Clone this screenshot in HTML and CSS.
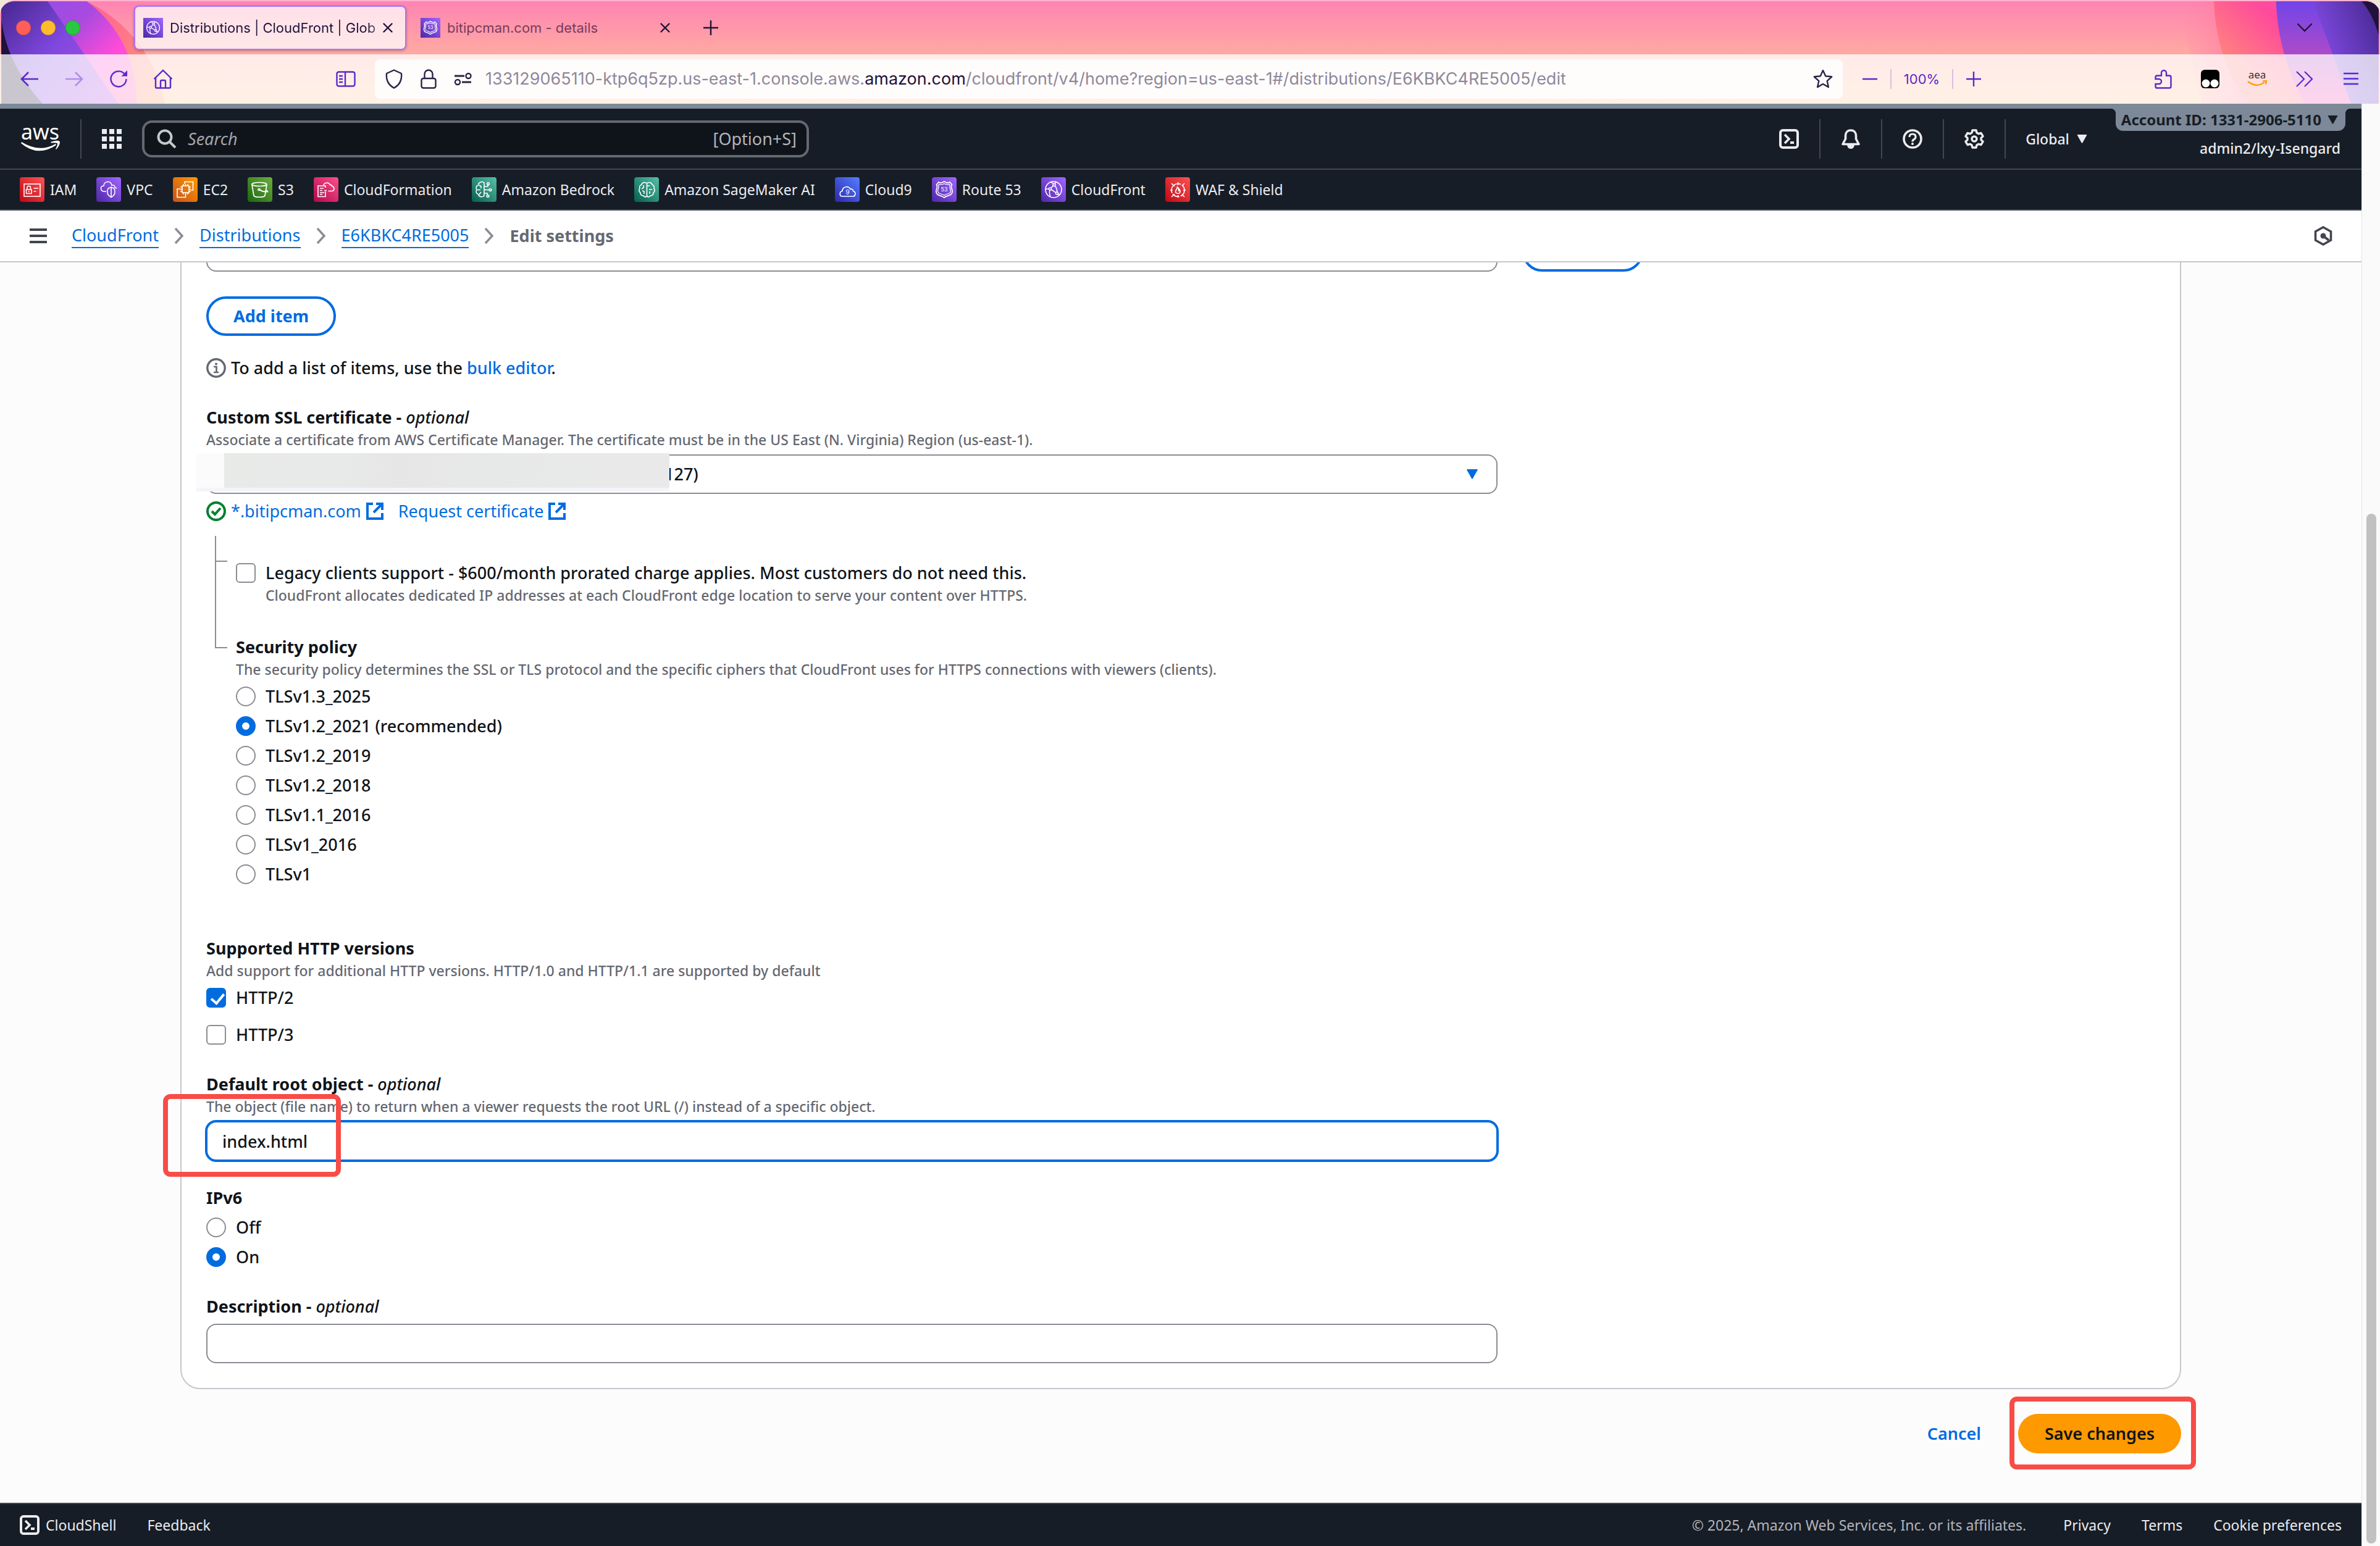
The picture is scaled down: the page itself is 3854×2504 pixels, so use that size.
FILE: index.html
```html
<!DOCTYPE html>
<html lang="en">
<head>
    <meta charset="UTF-8">
    <meta name="viewport" content="width=device-width, initial-scale=1.0">
    <title>Distributions | CloudFront | Global</title>
    <link rel="stylesheet" href="styles.css">
</head>
<body>
    <!-- Shared symbols -->
    <svg class="sprite" aria-hidden="true">
        <defs>
            <linearGradient id="g-red" x1="0" y1="1" x2="1" y2="0"><stop offset="0" stop-color="#bd0816"/><stop offset="1" stop-color="#ff5252"/></linearGradient>
            <linearGradient id="g-purple" x1="0" y1="1" x2="1" y2="0"><stop offset="0" stop-color="#4d27a8"/><stop offset="1" stop-color="#a166ff"/></linearGradient>
            <linearGradient id="g-orange" x1="0" y1="1" x2="1" y2="0"><stop offset="0" stop-color="#c8511b"/><stop offset="1" stop-color="#ff9900"/></linearGradient>
            <linearGradient id="g-green" x1="0" y1="1" x2="1" y2="0"><stop offset="0" stop-color="#1b660f"/><stop offset="1" stop-color="#6cae3e"/></linearGradient>
            <linearGradient id="g-pink" x1="0" y1="1" x2="1" y2="0"><stop offset="0" stop-color="#b0084d"/><stop offset="1" stop-color="#ff4f8b"/></linearGradient>
            <linearGradient id="g-teal" x1="0" y1="1" x2="1" y2="0"><stop offset="0" stop-color="#055f4e"/><stop offset="1" stop-color="#56c0a7"/></linearGradient>
            <linearGradient id="g-blue" x1="0" y1="1" x2="1" y2="0"><stop offset="0" stop-color="#2e27ad"/><stop offset="1" stop-color="#527fff"/></linearGradient>
        </defs>
        <symbol id="cloudfront" viewBox="0 0 40 40">
            <rect width="40" height="40" fill="url(#g-purple)"/>
            <g fill="none" stroke="#fff" stroke-width="1.6">
                <circle cx="20" cy="20" r="13"/>
                <circle cx="14.5" cy="19" r="2"/><circle cx="21" cy="12.500" r="2"/><circle cx="25.500" cy="26" r="2"/>
                <path d="M16 17.500l3.600-3.600M16.300 20l7.400 4.800M22.500 14.300c2.500 3 3.300 6 3.200 9.700M7 19h5.500M14 21c-1 3-.5 7 1 10.500M15 8c2 .5 4 1.500 5 3M24 8c-1 .7-1.500 1.500-2 2.700M27 27.500c1 .5 2 .5 3.500 0"/>
            </g>
        </symbol>
        <symbol id="route53-shield" viewBox="0 0 40 40">
            <rect width="40" height="40" fill="url(#g-purple)"/>
            <path d="M11 8c2 1.500 4 1.500 6 .4L20 7l3 1.400c2 1.100 4 1.100 6 -.4l3.500 4c-1.500 2.500-1.500 4 0 7.500 1 3 1 6-1.500 8.500-3 2-7.500 2-11 5-3.500-3-8-3-11-5-2.500-2.500-2.500-5.500-1.500-8.500 1.500-3.500 1.500-5 0-7.500z" fill="none" stroke="#fff" stroke-width="1.700"/>
            <path d="M12 11.500c3 1 5 .5 8-1 3 1.500 5 2 8 1l1.500 1.500c-1 2.500-.5 4 .5 7 .8 2.500.5 4-1 5.500-2.500 1.500-6 1.800-9 4-3-2.200-6.500-2.500-9-4-1.500-1.500-1.800-3-1-5.500 1-3 1.500-4.500.5-7z" fill="none" stroke="#fff" stroke-width="1.300"/>
        </symbol>
        <symbol id="caret" viewBox="0 0 16 14"><path d="M1 0h14q1 0 .6 1L9 13q-1 1.500-2 0L.4 1Q0 0 1 0z" fill="currentColor"/></symbol>
        <symbol id="chevron" viewBox="0 0 16 28"><path d="M2 2l11 12L2 26" fill="none" stroke="currentColor" stroke-width="3.500"/></symbol>
        <symbol id="external" viewBox="0 0 28 28"><path d="M11 2H2v24h24v-9M16 2h10v10M26 2L12 16" fill="none" stroke="currentColor" stroke-width="4"/></symbol>
        <symbol id="close" viewBox="0 0 16 16"><path d="M1.500 1.500l13 13M14.500 1.500l-13 13" stroke="currentColor" stroke-width="2.400" stroke-linecap="round"/></symbol>
        <symbol id="terminal" viewBox="0 0 32 32"><rect x="2" y="2" width="28" height="28" rx="4" fill="none" stroke="currentColor" stroke-width="4"/><path d="M9 9l7 7-7 7" fill="none" stroke="currentColor" stroke-width="3.600"/><path d="M18 22h6" stroke="currentColor" stroke-width="4"/></symbol>
    </svg>

    <!-- Browser chrome -->
    <header class="browser">
        <svg class="theme theme-left" viewBox="0 0 340 168" aria-hidden="true">
            <defs>
                <linearGradient id="t-violet" x1="0" y1="0" x2="1" y2=".8"><stop offset="0" stop-color="#45278f"/><stop offset=".5" stop-color="#8148e0"/><stop offset="1" stop-color="#b04be0"/></linearGradient>
                <linearGradient id="t-magenta" x1="0" y1="0" x2="1" y2=".8"><stop offset="0" stop-color="#8a50e8"/><stop offset=".45" stop-color="#a94ae0"/><stop offset=".75" stop-color="#ff4bd8"/><stop offset="1" stop-color="#ff60b0"/></linearGradient>
                <linearGradient id="t-coral" x1="0" y1="0" x2="1" y2="1"><stop offset="0" stop-color="#ff4aa2"/><stop offset=".7" stop-color="#ff8480"/><stop offset="1" stop-color="#ff9a66"/></linearGradient>
            </defs>
            <path d="M0 0h140c70 35 115 95 128 168H0z" fill="url(#t-coral)"/>
            <path d="M0 0h140c55 40 82 100 82 168H0z" fill="url(#t-magenta)"/>
            <path d="M0 0h76l116 168H0z" fill="url(#t-violet)"/>
            <path d="M0 30c8 55 30 95 68 138H0z" fill="#20123a"/>
        </svg>
        <svg class="theme theme-right" viewBox="0 0 374 168" aria-hidden="true">
            <defs>
                <linearGradient id="r-haze" x1="0" y1="0" x2="1" y2="0"><stop offset="0" stop-color="#ff86a8" stop-opacity="0"/><stop offset="1" stop-color="#ff7aa0"/></linearGradient>
                <linearGradient id="r-pink" x1="0" y1=".4" x2=".6" y2="0"><stop offset="0" stop-color="#ff7f80"/><stop offset=".6" stop-color="#ff4a9c"/><stop offset="1" stop-color="#ff4aa8"/></linearGradient>
                <linearGradient id="r-violet" x1="0" y1="0" x2="0" y2="1"><stop offset="0" stop-color="#7145e8"/><stop offset=".55" stop-color="#b04bc8"/><stop offset="1" stop-color="#ff4bb0"/></linearGradient>
                <linearGradient id="r-indigo" x1="0" y1=".6" x2="1" y2="0"><stop offset="0" stop-color="#8a50f0"/><stop offset="1" stop-color="#45278f"/></linearGradient>
            </defs>
            <path d="M44 0h70l50 168H84z" fill="url(#r-haze)"/>
            <path d="M104 0c2 60 20 120 56 168h214V0z" fill="url(#r-pink)"/>
            <path d="M206 0c2 60 18 115 47 168h121V0z" fill="url(#r-violet)"/>
            <path d="M266 0l63 168h45V0z" fill="url(#r-indigo)"/>
            <path d="M346 0c14 15 22 35 28 55V0z" fill="#20123a"/>
        </svg>

        <div class="tab-bar">
            <div class="lights">
                <span class="light light-close"></span>
                <span class="light light-min"></span>
                <span class="light light-max"></span>
            </div>
            <div class="tab active">
                <svg class="tab-icon"><use href="#cloudfront"/></svg>
                <span class="tab-title fade">Distributions | CloudFront | Glob</span>
                <button class="tab-close" aria-label="Close tab"><svg><use href="#close"/></svg></button>
            </div>
            <div class="tab">
                <svg class="tab-icon" viewBox="0 0 40 40"><use href="#route53-shield"/><text x="20" y="23" class="glyph-text" font-size="9" text-anchor="middle">53</text></svg>
                <span class="tab-title">bitipcman.com - details</span>
                <button class="tab-close" aria-label="Close tab"><svg><use href="#close"/></svg></button>
            </div>
            <button class="new-tab" aria-label="New tab"><svg viewBox="0 0 24 24"><path d="M12 0v24M0 12h24" stroke="currentColor" stroke-width="2.400"/></svg></button>
            <button class="all-tabs" aria-label="List all tabs"><svg viewBox="0 0 24 24"><path d="M1 6l11 11L23 6" fill="none" stroke="currentColor" stroke-width="2.400" stroke-linecap="round"/></svg></button>
        </div>

        <div class="nav-bar">
            <button class="nav-btn" aria-label="Back"><svg viewBox="0 0 32 32"><path d="M30 16H3M14 5L3 16l11 11" fill="none" stroke="currentColor" stroke-width="2.600"/></svg></button>
            <button class="nav-btn" aria-label="Forward" disabled><svg viewBox="0 0 32 32"><path d="M2 16h27M18 5l11 11-11 11" fill="none" stroke="currentColor" stroke-width="2.600"/></svg></button>
            <button class="nav-btn" aria-label="Reload"><svg viewBox="0 0 32 32"><path d="M28.500 16A12.500 12.500 0 1 1 25 7.200" fill="none" stroke="currentColor" stroke-width="2.400"/><path d="M30 2v9.500h-9.500z" fill="currentColor"/></svg></button>
            <button class="nav-btn" aria-label="Home"><svg viewBox="0 0 32 32"><path d="M1.500 16L16 2l14.500 14M4 14v15q0 1.500 1.500 1.500h21q1.500 0 1.500-1.500V14M12 30V20q0-2 2-2h4q2 0 2 2v10" fill="none" stroke="currentColor" stroke-width="2.400"/></svg></button>
            <button class="nav-btn sidebar-btn" aria-label="Sidebars"><svg viewBox="0 0 32 32"><rect x="1.500" y="4.500" width="29" height="23" rx="3" fill="none" stroke="currentColor" stroke-width="2.400"/><path d="M15 4v24M5 11h6M5 16h6M5 21h6" stroke="currentColor" stroke-width="2.400"/></svg></button>
            <div class="url-bar">
                <svg viewBox="0 0 32 32"><path d="M16 1.500l12 5.500c1 10-2 18-12 23.500C6 25 3 17 4 7z" fill="none" stroke="currentColor" stroke-width="2.400" stroke-linejoin="round"/></svg>
                <svg viewBox="0 0 32 32"><rect x="4.500" y="15" width="23" height="15.500" rx="3" fill="none" stroke="currentColor" stroke-width="2.400"/><path d="M9.500 15V8a6.500 6.500 0 0 1 13 0v7" fill="none" stroke="currentColor" stroke-width="2.400"/></svg>
                <svg viewBox="0 0 32 32"><circle cx="24.500" cy="11" r="4" fill="none" stroke="currentColor" stroke-width="2.400"/><circle cx="7" cy="21" r="4" fill="none" stroke="currentColor" stroke-width="2.400"/><path d="M2 11h16M14 21h15" stroke="currentColor" stroke-width="2.800"/></svg>
                <div class="url-text" role="textbox" aria-label="Address" contenteditable="true">133129065110-ktp6q5zp.us-east-1.console.aws.<b>amazon.com</b>/cloudfront/v4/home?region=us-east-1#/distributions/E6KBKC4RE5005/edit</div>
                <button class="star" aria-label="Bookmark this page"><svg viewBox="0 0 32 32"><path d="M16 2l4.200 9.300 10 1-7.500 6.800 2.200 10L16 24l-8.900 5.100 2.200-10L1.800 12.300l10-1z" fill="none" stroke="currentColor" stroke-width="2.400" stroke-linejoin="round"/></svg></button>
            </div>
            <div class="zoom-controls">
                <button aria-label="Zoom out"><svg viewBox="0 0 24 24"><path d="M0 12h24" stroke="currentColor" stroke-width="2.400"/></svg></button>
                <button class="zoom-value">100%</button>
                <button aria-label="Zoom in"><svg viewBox="0 0 24 24"><path d="M0 12h24M12 0v24" stroke="currentColor" stroke-width="2.400"/></svg></button>
            </div>
            <div class="extensions">
                <button class="ext-btn" aria-label="Extensions"><svg viewBox="0 0 32 32"><path d="M4 30.500h22q2.500 0 2.500-2.500V13q0-2.500-2.500-2.500h-5V6a4 4 0 0 0-8 0v4.500H6Q3.500 10.500 3.500 13v3H9a4 4 0 0 1 0 8H3.500v4q0 2.500 2.500 2.500" fill="none" stroke="currentColor" stroke-width="2.400"/></svg></button>
                <button class="ext-btn" aria-label="Tampermonkey"><svg viewBox="0 0 32 32"><rect x="1" y="1" width="30" height="30" rx="6"/><circle cx="9" cy="23" r="6.500" fill="#fff"/><circle cx="23" cy="23" r="6.500" fill="#fff"/></svg></button>
                <button class="ext-btn aea-btn" aria-label="aea"><svg viewBox="0 0 40 32"><text x="20" y="15" font-size="17" text-anchor="middle" class="aea-text">aea</text><path d="M5 20q15 11 27 1M29 19.500l6-.5-1 5.500" fill="none" stroke="#ff9900" stroke-width="2.200"/></svg></button>
                <button class="ext-btn" aria-label="More tools"><svg viewBox="0 0 32 32"><path d="M4 4l12 12L4 28M17 4l12 12-12 12" fill="none" stroke="currentColor" stroke-width="2.200"/></svg></button>
                <button class="ext-btn" aria-label="Menu"><svg viewBox="0 0 32 32"><path d="M4 7h24M4 15.500h24M4 24h24" stroke="currentColor" stroke-width="2.400"/></svg></button>
            </div>
        </div>
    </header>

    <div class="viewport">
        <div class="page">
            <!-- Console header -->
            <div class="console-top">
                <a class="aws-logo" href="#" aria-label="AWS"><svg viewBox="0 0 64 44"><text x="31" y="23" font-size="34" text-anchor="middle">aws</text><path d="M1 27q29 18 55 3l1 2q-30 20-57-3z"/><path d="M48 27q13-4 15-.5 0 6-6 12.500-1 0-.5-1.500 3-6 2.500-8.500-3-1-10-.5z"/></svg></a>
                <button class="services" aria-label="Services"><svg viewBox="0 0 32 32"><path d="M0 0h8v8H0zM12 0h8v8h-8zM24 0h8v8h-8zM0 12h8v8H0zM12 12h8v8h-8zM24 12h8v8h-8zM0 24h8v8H0zM12 24h8v8h-8zM24 24h8v8h-8z" fill="currentColor"/></svg></button>
                <label class="search">
                    <svg viewBox="0 0 32 32"><circle cx="13" cy="13" r="10.500" fill="none" stroke="currentColor" stroke-width="4"/><path d="M20 20l10 10" stroke="currentColor" stroke-width="4"/></svg>
                    <input type="text" placeholder="Search" aria-label="Search">
                    <span>[Option+S]</span>
                </label>
                <div class="tools">
                    <button class="tool" aria-label="CloudShell"><svg><use href="#terminal"/></svg></button>
                    <button class="tool" aria-label="Notifications"><svg viewBox="0 0 32 32"><path d="M16 2c-6 0-8.500 4.500-8.500 9v5L3 24.500h26L24.500 16v-5c0-4.500-2.500-9-8.500-9z" fill="none" stroke="currentColor" stroke-width="3.600" stroke-linejoin="round"/><path d="M10 26h12q-1 6-6 6t-6-6z" fill="currentColor"/></svg></button>
                    <button class="tool" aria-label="Help"><svg viewBox="0 0 32 32"><circle cx="16" cy="16" r="14" fill="none" stroke="currentColor" stroke-width="3.600"/><path d="M11 13q0-5 5-5t5 4.500q0 3-3 4.500-2 1-2 3.500" fill="none" stroke="currentColor" stroke-width="3.200"/><circle cx="16" cy="24" r="2" fill="currentColor"/></svg></button>
                    <button class="tool" aria-label="Settings"><svg viewBox="0 0 32 32"><path d="M13 2h6l1 4 3 1.700 4-1.200 3 5.200-3 2.800v3l3 2.800-3 5.200-4-1.200L20 26l-1 4h-6l-1-4-3-1.700-4 1.200-3-5.200 3-2.800v-3l-3-2.800L5 6.500l4 1.200L12 6z" fill="none" stroke="currentColor" stroke-width="3.400" stroke-linejoin="round"/><circle cx="16" cy="16" r="4" fill="none" stroke="currentColor" stroke-width="3.400"/></svg></button>
                    <button class="region">Global <svg class="caret"><use href="#caret"/></svg></button>
                    <div class="account">
                        <button class="account-id">Account ID: 1331-2906-5110 <svg class="caret"><use href="#caret"/></svg></button>
                        <span class="user">admin2/lxy-Isengard</span>
                    </div>
                </div>
            </div>

            <!-- Favorites -->
            <nav class="favorites">
                <a href="#"><svg viewBox="0 0 40 40"><rect width="40" height="40" fill="url(#g-red)"/><g fill="none" stroke="#fff" stroke-width="1.600"><rect x="7" y="11" width="26" height="20"/><rect x="10.500" y="20" width="8.500" height="6.500"/><path d="M12 20v-3a2.700 2.700 0 0 1 5.500 0v3M22.500 18H30M22.500 23h4M14.700 22v2.500"/></g></svg>IAM</a>
                <a href="#"><svg viewBox="0 0 40 40"><rect width="40" height="40" fill="url(#g-purple)"/><g fill="none" stroke="#fff" stroke-width="1.600"><path d="M16 23h-4c-6-1-6-9 0-9 0-8 12-9 13-1 3-1 5 1 5 3.500 2 .5 2.500 1 3 2M24 16c-6 2.500-6 3-6 8 0 5 3 7 6 8.500 3-1.500 6-3.500 6-8.500 0-5 0-5.500-6-8zM24 16v16"/></g></svg>VPC</a>
                <a href="#"><svg viewBox="0 0 40 40"><rect width="40" height="40" fill="url(#g-orange)"/><g fill="none" stroke="#fff" stroke-width="1.600"><rect x="15" y="14" width="11" height="11"/><path d="M17 14v-3M20.500 14v-3M24 14v-3M17 28v-3M20.500 28v-3M24 28v-3M15 16h-3M15 19.500h-3M15 23h-3M29 16h-3M29 19.500h-3M29 23h-3M19 11V7.500h13.500V21H29M12 19H7v13.500h13.500V28"/></g></svg>EC2</a>
                <a href="#"><svg viewBox="0 0 40 40"><rect width="40" height="40" fill="url(#g-green)"/><g fill="none" stroke="#fff" stroke-width="1.700"><ellipse cx="19" cy="11.500" rx="12" ry="3"/><path d="M7 12l3 18c2 3 16 3 18 0l3-18M19 20c5 3.500 10 4 13.500 3.500-.5-2-2-2.500-3.500-3"/><circle cx="18.500" cy="20" r="1.500"/></g></svg>S3</a>
                <a href="#"><svg viewBox="0 0 40 40"><rect width="40" height="40" fill="url(#g-pink)"/><g fill="none" stroke="#fff" stroke-width="1.600"><path d="M19 23v8.500H7V14h12v3M10 18h6M10 21.500h4M10 25h7M10 28h4M16 13c1-5 9-5 10.500-.5 2-.5 3 .5 3 2 5 1 4 8 0 8h-6M17 21.500h4"/></g></svg>CloudFormation</a>
                <a href="#"><svg viewBox="0 0 40 40"><rect width="40" height="40" fill="url(#g-teal)"/><g fill="none" stroke="#fff" stroke-width="1.600"><path d="M20 30c-3 3-9 2-9-2-4-1-5-5-3-7.500-2-3-1-7 2.500-7.500 0-5 6.500-7 9.500-4zM20 15h6v-3M20 20.500h8M20 26h5v3M12 13l3 2v3M9 20.500h5M12 28l3-4"/><circle cx="26.500" cy="10.500" r="1.800"/><circle cx="30" cy="20.500" r="1.800"/><circle cx="26" cy="30.500" r="1.800"/></g></svg>Amazon Bedrock</a>
                <a href="#"><svg viewBox="0 0 40 40"><rect width="40" height="40" fill="url(#g-teal)"/><g fill="none" stroke="#fff" stroke-width="1.600"><path d="M20.500 9v23M20.500 10c-3-3-8-1-8.500 2-3 1-4 4-3 6-2 3-1 6 1 7 0 4 3 5 5 5 2 3 5 2 5.500 0M20.500 10c3-3 8-1 8.500 2 3 1 4 4 3 6 2 3 1 6-1 7 0 4-3 5-5 5-2 3-5 2-5.500 0M15 13v4l-3 2M16 27v-4l-3-1M25 14h-4.500M25 23v4M24 20h5"/></g></svg>Amazon SageMaker AI</a>
                <a href="#"><svg viewBox="0 0 40 40"><rect width="40" height="40" fill="url(#g-blue)"/><path d="M12 31c-5 0-5-8 0-8.500 0-8 11-9 13-3 3-1 4.500.5 4.500 3 5 1 4 8.500 0 8.500z" fill="none" stroke="#fff" stroke-width="1.700"/><text x="20.500" y="28" class="glyph-text" font-size="10" text-anchor="middle">9</text></svg>Cloud9</a>
                <a href="#"><svg viewBox="0 0 40 40"><use href="#route53-shield"/><text x="20" y="23" class="glyph-text" font-size="9" text-anchor="middle">53</text></svg>Route 53</a>
                <a href="#"><svg><use href="#cloudfront"/></svg>CloudFront</a>
                <a href="#"><svg viewBox="0 0 40 40"><rect width="40" height="40" fill="url(#g-red)"/><g fill="none" stroke="#fff" stroke-width="1.700"><circle cx="20.500" cy="21" r="10.500" stroke-dasharray="12 2"/><path d="M20.500 8v5M20.500 29v4M8 21h4M29 21h4M10 10l5 5M31 10l-4 4M10 32l5-5M31 32l-4-4M17 25c-2-3 2-5 2.500-9 3 2 2 4 2 6 1 0 1.500-1 1.500-2 2 3 1 6-2 6.500-2 0-3-.5-4-1.500z"/></g></svg>WAF &amp; Shield</a>
            </nav>

            <!-- Breadcrumbs -->
            <div class="breadcrumbs">
                <button class="menu-btn" aria-label="Open navigation"><svg viewBox="0 0 28 24"><path d="M0 2h28M0 12h28M0 22h28" stroke="currentColor" stroke-width="4"/></svg></button>
                <a href="#">CloudFront</a>
                <svg class="chevron"><use href="#chevron"/></svg>
                <a href="#">Distributions</a>
                <svg class="chevron"><use href="#chevron"/></svg>
                <a href="#">E6KBKC4RE5005</a>
                <svg class="chevron"><use href="#chevron"/></svg>
                <span class="current">Edit settings</span>
                <button class="help-btn" aria-label="Open help panel"><svg viewBox="0 0 32 32"><path d="M16 2l12.500 7v14L16 30 3.500 23V9z" fill="none" stroke="currentColor" stroke-width="3.600"/><circle cx="16" cy="16" r="4.500" fill="currentColor"/><path d="M17 17l8 6" stroke="currentColor" stroke-width="4"/></svg></button>
            </div>

            <!-- Settings form, scrolled to the end -->
            <main class="content">
                <form class="form" onsubmit="return false">
                    <div class="panel">
                        <div class="cname-row">
                            <input type="text" class="textbox" aria-label="Alternate domain name">
                            <button class="btn btn-remove">Remove</button>
                        </div>
                        <button class="btn add-item">Add item</button>
                        <p class="info"><svg viewBox="0 0 32 32"><circle cx="16" cy="16" r="14.200" fill="none" stroke="#656871" stroke-width="3.400"/><path d="M12 14h4.500v9M12 23h8" fill="none" stroke="#656871" stroke-width="2.600"/><circle cx="16" cy="9.500" r="2" fill="#656871"/></svg><span>To add a list of items, use the <a href="#">bulk editor</a>.</span></p>

                        <div class="field">
                            <label class="label" for="cert">Custom SSL certificate - <i>optional</i></label>
                            <p class="caption">Associate a certificate from AWS Certificate Manager. The certificate must be in the US East (N. Virginia) Region (us-east-1).</p>
                            <div class="control select-wrap">
                                <select id="cert" class="textbox">
                                    <option>127)</option>
                                </select>
                                <svg class="select-caret"><use href="#caret"/></svg>
                                <div class="mask"></div>
                            </div>
                            <div class="cert-links">
                                <svg class="ok" viewBox="0 0 32 32"><circle cx="16" cy="16" r="14" fill="none" stroke="#00802f" stroke-width="4"/><path d="M9 16l5 5 9-10" fill="none" stroke="#00802f" stroke-width="4"/></svg>
                                <a href="#">*.bitipcman.com <svg class="ext"><use href="#external"/></svg></a>
                                <a href="#">Request certificate <svg class="ext"><use href="#external"/></svg></a>
                            </div>
                        </div>

                        <div class="tree">
                            <div class="branch">
                                <label class="option"><input type="checkbox">Legacy clients support - $600/month prorated charge applies. Most customers do not need this.</label>
                                <p class="caption option-caption">CloudFront allocates dedicated IP addresses at each CloudFront edge location to serve your content over HTTPS.</p>
                            </div>
                            <div class="branch last">
                                <div class="label">Security policy</div>
                                <p class="caption">The security policy determines the SSL or TLS protocol and the specific ciphers that CloudFront uses for HTTPS connections with viewers (clients).</p>
                                <div class="control options">
                                    <label class="option"><input type="radio" name="tls">TLSv1.3_2025</label>
                                    <label class="option"><input type="radio" name="tls" checked>TLSv1.2_2021 (recommended)</label>
                                    <label class="option"><input type="radio" name="tls">TLSv1.2_2019</label>
                                    <label class="option"><input type="radio" name="tls">TLSv1.2_2018</label>
                                    <label class="option"><input type="radio" name="tls">TLSv1.1_2016</label>
                                    <label class="option"><input type="radio" name="tls">TLSv1_2016</label>
                                    <label class="option"><input type="radio" name="tls">TLSv1</label>
                                </div>
                            </div>
                        </div>

                        <div class="field http-versions">
                            <div class="label">Supported HTTP versions</div>
                            <p class="caption">Add support for additional HTTP versions. HTTP/1.0 and HTTP/1.1 are supported by default</p>
                            <div class="control options checks">
                                <label class="option"><input type="checkbox" checked>HTTP/2</label>
                                <label class="option"><input type="checkbox">HTTP/3</label>
                            </div>
                        </div>

                        <div class="field">
                            <label class="label" for="root">Default root object - <i>optional</i></label>
                            <p class="caption">The object (file name) to return when a viewer requests the root URL (/) instead of a specific object.</p>
                            <div class="control marked">
                                <input type="text" id="root" class="textbox focused" value="index.html">
                                <span class="mark mark-root"></span>
                            </div>
                        </div>

                        <div class="field">
                            <div class="label">IPv6</div>
                            <div class="control options">
                                <label class="option"><input type="radio" name="ipv6">Off</label>
                                <label class="option"><input type="radio" name="ipv6" checked>On</label>
                            </div>
                        </div>

                        <div class="field">
                            <label class="label" for="desc">Description - <i>optional</i></label>
                            <div class="control"><input type="text" id="desc" class="textbox"></div>
                        </div>
                    </div>

                    <div class="actions">
                        <button class="btn-link">Cancel</button>
                        <div class="marked">
                            <button class="btn-primary">Save changes</button>
                            <span class="mark mark-save"></span>
                        </div>
                    </div>
                </form>
            </main>

            <footer class="footer">
                <a href="#"><svg><use href="#terminal"/></svg>CloudShell</a>
                <a href="#">Feedback</a>
                <span class="copyright">© 2025, Amazon Web Services, Inc. or its affiliates.</span>
                <a href="#">Privacy</a>
                <a href="#">Terms</a>
                <a href="#">Cookie preferences</a>
            </footer>
        </div>
        <div class="scrollbar"><div class="thumb"></div></div>
    </div>
</body>
</html>
```
FILE: styles.css
```css
* {
    box-sizing: border-box;
}

body {
    margin: 0;
    height: 100vh;
    display: flex;
    flex-direction: column;
    overflow: hidden;
    font-family: "Noto Sans", "Open Sans", sans-serif;
    font-size: 27px;
    line-height: 40px;
    color: #0f141a;
    background: #efe8d8;
}

button {
    font: inherit;
    color: inherit;
    background: none;
    border: none;
    margin: 0;
    padding: 0;
    cursor: pointer;
}

svg {
    display: block;
    flex: none;
}

p {
    margin: 0;
}

a {
    color: #006ce0;
    text-decoration: none;
}

.sprite {
    position: absolute;
    width: 0;
    height: 0;
}

.glyph-text {
    fill: #fff;
    font-family: Inter, sans-serif;
}

/* Browser chrome */
.browser {
    position: relative;
    flex: none;
    font-family: Inter, sans-serif;
    font-size: 22px;
    color: #20123a;
    background: linear-gradient(#ff84b2, #ffaba2 88px, #ffc48f);
    border-top: 2px solid #ffb3d0;
    border-radius: 24px 24px 0 0;
    overflow: hidden;
}

.theme {
    position: absolute;
    top: 0;
    height: 100%;
}

.theme-left {
    left: 0;
    width: 340px;
}

.theme-right {
    right: 0;
    width: 374px;
}

.tab-bar {
    position: relative;
    height: 86px;
    padding: 0 0 0 26px;
    display: flex;
    align-items: center;
    gap: 8px;
}

.lights {
    display: flex;
    gap: 16px;
    margin-right: 79px;
}

.light {
    width: 24px;
    height: 24px;
    border-radius: 50%;
    border: 1px solid rgba(0, 0, 0, 0.15);
}

.light-close {
    background: #ff5f57;
}

.light-min {
    background: #febc2e;
}

.light-max {
    background: #28c840;
}

.tab {
    width: 441px;
    height: 72px;
    display: flex;
    align-items: center;
    padding: 0 20px 0 13px;
    border: 2px solid transparent;
    border-radius: 8px;
    color: #7a3a5e;
}

.tab.active {
    color: #20123a;
    background: rgba(255, 250, 250, 0.78);
    border-color: #a873ff;
    box-shadow: 0 1px 4px rgba(0, 0, 0, 0.3);
}

.tab-icon {
    width: 32px;
    height: 32px;
    margin-right: 11px;
}

.tab-title {
    flex: 1;
    white-space: nowrap;
}

.fade {
    mask-image: linear-gradient(to right, #000 92%, transparent 105%);
}

.tab-close {
    color: #20123a;
}

.tab-close svg {
    width: 16px;
    height: 16px;
}

.new-tab {
    width: 72px;
}

.new-tab svg,
.all-tabs svg {
    width: 24px;
    height: 24px;
    margin: 0 auto;
}

.all-tabs {
    width: 76px;
    margin-left: auto;
    margin-right: 84px;
}

.nav-bar {
    position: relative;
    height: 80px;
    display: flex;
    align-items: center;
    padding: 0 9px 0 12px;
    color: #592acb;
    background: rgba(255, 255, 255, 0.76);
}

.nav-btn {
    width: 72px;
}

.nav-btn svg {
    width: 32px;
    height: 32px;
    margin: 0 auto;
}

.nav-btn:disabled {
    color: #592acb;
    opacity: 0.4;
}

.sidebar-btn {
    margin-left: 224px;
}

.url-bar {
    flex: 1;
    height: 64px;
    margin: 0 11px;
    padding: 0 16px 0 15px;
    display: flex;
    align-items: center;
    gap: 24px;
    border-radius: 8px;
    background: rgba(255, 255, 255, 0.85);
    color: #2f2145;
    font-size: 27px;
}

.url-bar svg {
    width: 32px;
    height: 32px;
}

.url-text {
    flex: 1;
    margin-left: -4px;
    white-space: nowrap;
    color: #8f889b;
}

.url-text b {
    font-weight: 400;
    color: #20123a;
}

.zoom-controls {
    display: flex;
    align-items: center;
}

.zoom-controls button {
    width: 66px;
    height: 32px;
    line-height: 32px;
}

.zoom-controls svg {
    width: 24px;
    height: 24px;
    margin: 0 auto;
}

.zoom-controls .zoom-value {
    width: 102px;
    border: 1px solid #d9bfdf;
    border-width: 0 2px;
}

.extensions {
    display: flex;
    margin-left: 236px;
}

.ext-btn {
    width: 76px;
}

.ext-btn svg {
    width: 32px;
    height: 32px;
    margin: 0 auto;
}

.aea-btn svg {
    width: 40px;
}

.aea-text {
    font-family: "Noto Sans", sans-serif;
    fill: #35323c;
}

/* Page and scrollbar */
.viewport {
    flex: 1;
    min-height: 0;
    display: flex;
}

.page {
    flex: 1;
    min-width: 0;
    display: flex;
    flex-direction: column;
}

.scrollbar {
    width: 30px;
    padding: 664px 6px 4px 7px;
    background: #fafafa;
    border-left: 1px solid #e6e6e6;
}

.thumb {
    height: 100%;
    border-radius: 8px;
    background: #c1c1c1;
}

/* Console header */
.console-top {
    flex: none;
    height: 107px;
    display: flex;
    border-top: 8px solid #7d8998;
    border-bottom: 2px solid #424650;
    background: #161d26;
    color: #ebebf0;
    font-size: 23px;
    align-items: center;
}

.aws-logo {
    width: 132px;
    height: 64px;
    padding: 10px 34px;
    border-right: 2px solid #424650;
}

.aws-logo svg {
    width: 64px;
    height: 44px;
    fill: #fff;
}

.services {
    width: 98px;
}

.services svg {
    width: 32px;
    height: 32px;
    margin: 0 auto;
}

.search {
    width: 1080px;
    height: 60px;
    padding: 0 16px 0 20px;
    display: flex;
    align-items: center;
    gap: 18px;
    border: 4px solid #656871;
    border-radius: 16px;
    background: #0f141a;
    color: #b4b4bb;
    font-size: 27px;
}

.search svg {
    width: 32px;
    height: 32px;
    color: #c6c6cd;
}

.search input {
    flex: 1;
    min-width: 0;
    font: inherit;
    color: inherit;
    background: none;
    border: none;
    outline: none;
    padding: 0;
}

.search input::placeholder {
    color: #a4a4ad;
    font-style: italic;
}

.tools {
    margin-left: auto;
    align-self: stretch;
    display: flex;
    align-items: center;
    padding-right: 26px;
}

.tool {
    width: 100px;
    height: 64px;
    border-right: 2px solid #424650;
}

.tool svg {
    width: 32px;
    height: 32px;
    margin: 0 auto;
}

.region {
    display: flex;
    align-items: center;
    gap: 12px;
    margin: 0 46px 0 32px;
    font-weight: 500;
}

.caret {
    width: 17px;
    height: 14px;
}

.account {
    align-self: stretch;
    display: flex;
    flex-direction: column;
    align-items: flex-end;
}

.account-id {
    position: relative;
    display: flex;
    align-items: center;
    gap: 10px;
    height: 36px;
    padding: 0 12px 0 9px;
    border-radius: 0 0 12px 12px;
    background: #7d8998;
    color: #161d26;
    font-size: 24px;
    font-weight: 700;
}

.account-id::before,
.account-id::after {
    content: "";
    position: absolute;
    top: 0;
    width: 8px;
    height: 8px;
}

.account-id::before {
    left: -8px;
    background: radial-gradient(circle at 0 100%, transparent 8px, #7d8998 8px);
}

.account-id::after {
    right: -8px;
    background: radial-gradient(circle at 100% 100%, transparent 8px, #7d8998 8px);
}

.user {
    margin: 8px 8px 0 0;
    font-weight: 500;
}

/* Favorites */
.favorites {
    flex: none;
    height: 66px;
    padding: 0 32px;
    display: flex;
    align-items: center;
    gap: 32px;
    border-bottom: 2px solid #424650;
    background: #161d26;
    font-size: 23px;
}

.favorites a {
    display: flex;
    align-items: center;
    gap: 9px;
    color: #ebebf0;
}

.favorites svg {
    width: 40px;
    height: 40px;
    border-radius: 4px;
}

/* Breadcrumbs */
.breadcrumbs {
    flex: none;
    height: 84px;
    padding: 0 46px 0 48px;
    display: flex;
    align-items: center;
    border-bottom: 2px solid #c6c6cd;
    background: #fff;
}

.menu-btn {
    width: 28px;
    margin-right: 40px;
    color: #424650;
}

.menu-btn svg {
    width: 28px;
    height: 24px;
}

.breadcrumbs a {
    line-height: 38px;
    border-bottom: 2px solid #006ce0;
}

.chevron {
    width: 16px;
    height: 28px;
    margin: 0 25px;
    color: #8c8c94;
}

.current {
    font-weight: 700;
    color: #656871;
}

.help-btn {
    margin-left: auto;
    color: #424650;
}

.help-btn svg {
    width: 32px;
    height: 32px;
}

/* Form */
.content {
    flex: 1;
    min-height: 0;
    overflow: hidden;
    padding: 0 40px 80px;
    display: flex;
    flex-direction: column;
    justify-content: flex-end;
    background: #fcfcfd;
}

.form {
    width: 100%;
    max-width: 3240px;
    margin: 0 auto;
    font-weight: 500;
}

.panel {
    padding: 40px;
    border: 2px solid #c6c6cd;
    border-radius: 32px;
    background: #fff;
}

.cname-row {
    display: grid;
    grid-template-columns: repeat(3, 1fr);
    gap: 40px;
}

.cname-row .textbox {
    grid-column: span 2;
    width: 100%;
}

.textbox {
    display: block;
    width: calc((100% - 80px) / 3 * 2 + 40px);
    height: 64px;
    padding: 0 24px;
    font: inherit;
    color: inherit;
    border: 2px solid #8c8c94;
    border-radius: 16px;
    background: #fff;
    outline: none;
    appearance: none;
}

.textbox.focused {
    border-color: #006ce0;
    box-shadow: 0 0 0 2px #006ce0;
}

.btn {
    height: 64px;
    padding: 0 40px;
    border: 4px solid #006ce0;
    border-radius: 40px;
    background: #fff;
    color: #006ce0;
    font-weight: 700;
}

.btn-remove {
    justify-self: start;
}

.add-item {
    display: block;
    margin-top: 40px;
}

.info {
    display: flex;
    align-items: center;
    gap: 8px;
    margin: 32px 0 40px;
}

.info svg,
.ok {
    width: 32px;
    height: 32px;
}

.field + .field {
    margin-top: 40px;
}

.label {
    display: block;
    font-weight: 700;
}

.label i {
    font-weight: 500;
}

.caption {
    font-size: 23px;
    line-height: 32px;
    color: #656871;
}

.control {
    margin-top: 8px;
}

.select-wrap {
    position: relative;
}

.select-wrap .textbox {
    padding-left: 740px;
}

.select-caret {
    position: absolute;
    top: 24px;
    right: calc((100% - 80px) / 3 + 70px);
    width: 22px;
    height: 16px;
    color: #006ce0;
}

/* Redacted part of the certificate name */
.mask {
    position: absolute;
    top: -2px;
    left: -16px;
    width: 766px;
    height: 62px;
    background:
        linear-gradient(transparent 56px, #f4f4fa 56px),
        linear-gradient(90deg, #fbfbfb 45px, #e8eae8 45px, #e8e9e9 240px, #e6e6e6 330px, #e7e9e8 480px, #e9e9e9);
}

.cert-links {
    display: flex;
    align-items: center;
    margin-top: 8px;
    font-weight: 400;
}

.cert-links a {
    display: flex;
    align-items: center;
    gap: 8px;
    margin: 0 16px 0 8px;
}

.ext {
    width: 28px;
    height: 28px;
}

/* Tree lines */
.tree {
    padding: 20px 0 0 14px;
}

.branch {
    position: relative;
    padding: 40px 0 48px 34px;
}

.branch::before {
    content: "";
    position: absolute;
    top: 0;
    bottom: 0;
    left: 0;
    border-left: 2px solid #8c8c94;
}

.branch::after {
    content: "";
    position: absolute;
    top: 40px;
    left: 0;
    width: 20px;
    border-top: 2px solid #8c8c94;
}

.branch.last {
    padding: 0 0 0 34px;
}

.branch.last::before {
    bottom: auto;
    height: 20px;
}

.branch.last::after {
    top: 20px;
}

.option {
    display: flex;
    align-items: center;
    gap: 16px;
    cursor: pointer;
}

.option-caption {
    padding-left: 48px;
}

.options {
    display: flex;
    flex-direction: column;
    align-items: flex-start;
    gap: 8px;
}

.options.checks {
    gap: 20px;
}

.option input {
    appearance: none;
    flex: none;
    width: 32px;
    height: 32px;
    margin: 0;
    border: 2px solid #8c8c94;
    border-radius: 6px;
    background: #fff;
}

.option input[type="radio"] {
    border-radius: 50%;
}

.option input[type="radio"]:checked {
    border: 10px solid #006ce0;
}

.option input[type="checkbox"]:checked {
    position: relative;
    background: #006ce0;
    border-color: #006ce0;
}

.option input[type="checkbox"]:checked::after {
    content: "";
    position: absolute;
    top: 3px;
    left: 10px;
    width: 9px;
    height: 17px;
    border: solid #fff;
    border-width: 0 4px 4px 0;
    transform: rotate(40deg);
}

.http-versions {
    margin-top: 80px;
}

/* Red markers */
.marked {
    position: relative;
}

.mark {
    position: absolute;
    border: 8px solid #f84c47;
    border-radius: 12px;
    pointer-events: none;
}

.mark-root {
    top: -44px;
    left: -70px;
    width: 288px;
    height: 134px;
}

.mark-save {
    top: -28px;
    right: -24px;
    bottom: -26px;
    left: -14px;
}

.actions {
    display: flex;
    justify-content: flex-end;
    align-items: center;
    gap: 60px;
    margin-top: 40px;
    font-weight: 600;
}

.btn-link {
    color: #006ce0;
}

.btn-primary {
    display: block;
    height: 64px;
    padding: 0 43px;
    border-radius: 40px;
    background: #ff9900;
    color: #0f141a;
}

.footer {
    flex: none;
    height: 70px;
    padding: 0 32px;
    display: flex;
    align-items: center;
    gap: 50px;
    border-top: 2px solid #424650;
    background: #161d26;
    font-size: 23px;
}

.footer a {
    display: flex;
    align-items: center;
    gap: 10px;
    color: #ebebf0;
}

.footer svg {
    width: 32px;
    height: 32px;
}

.copyright {
    margin-left: auto;
    margin-right: 10px;
    color: #b4b4bb;
}
```
